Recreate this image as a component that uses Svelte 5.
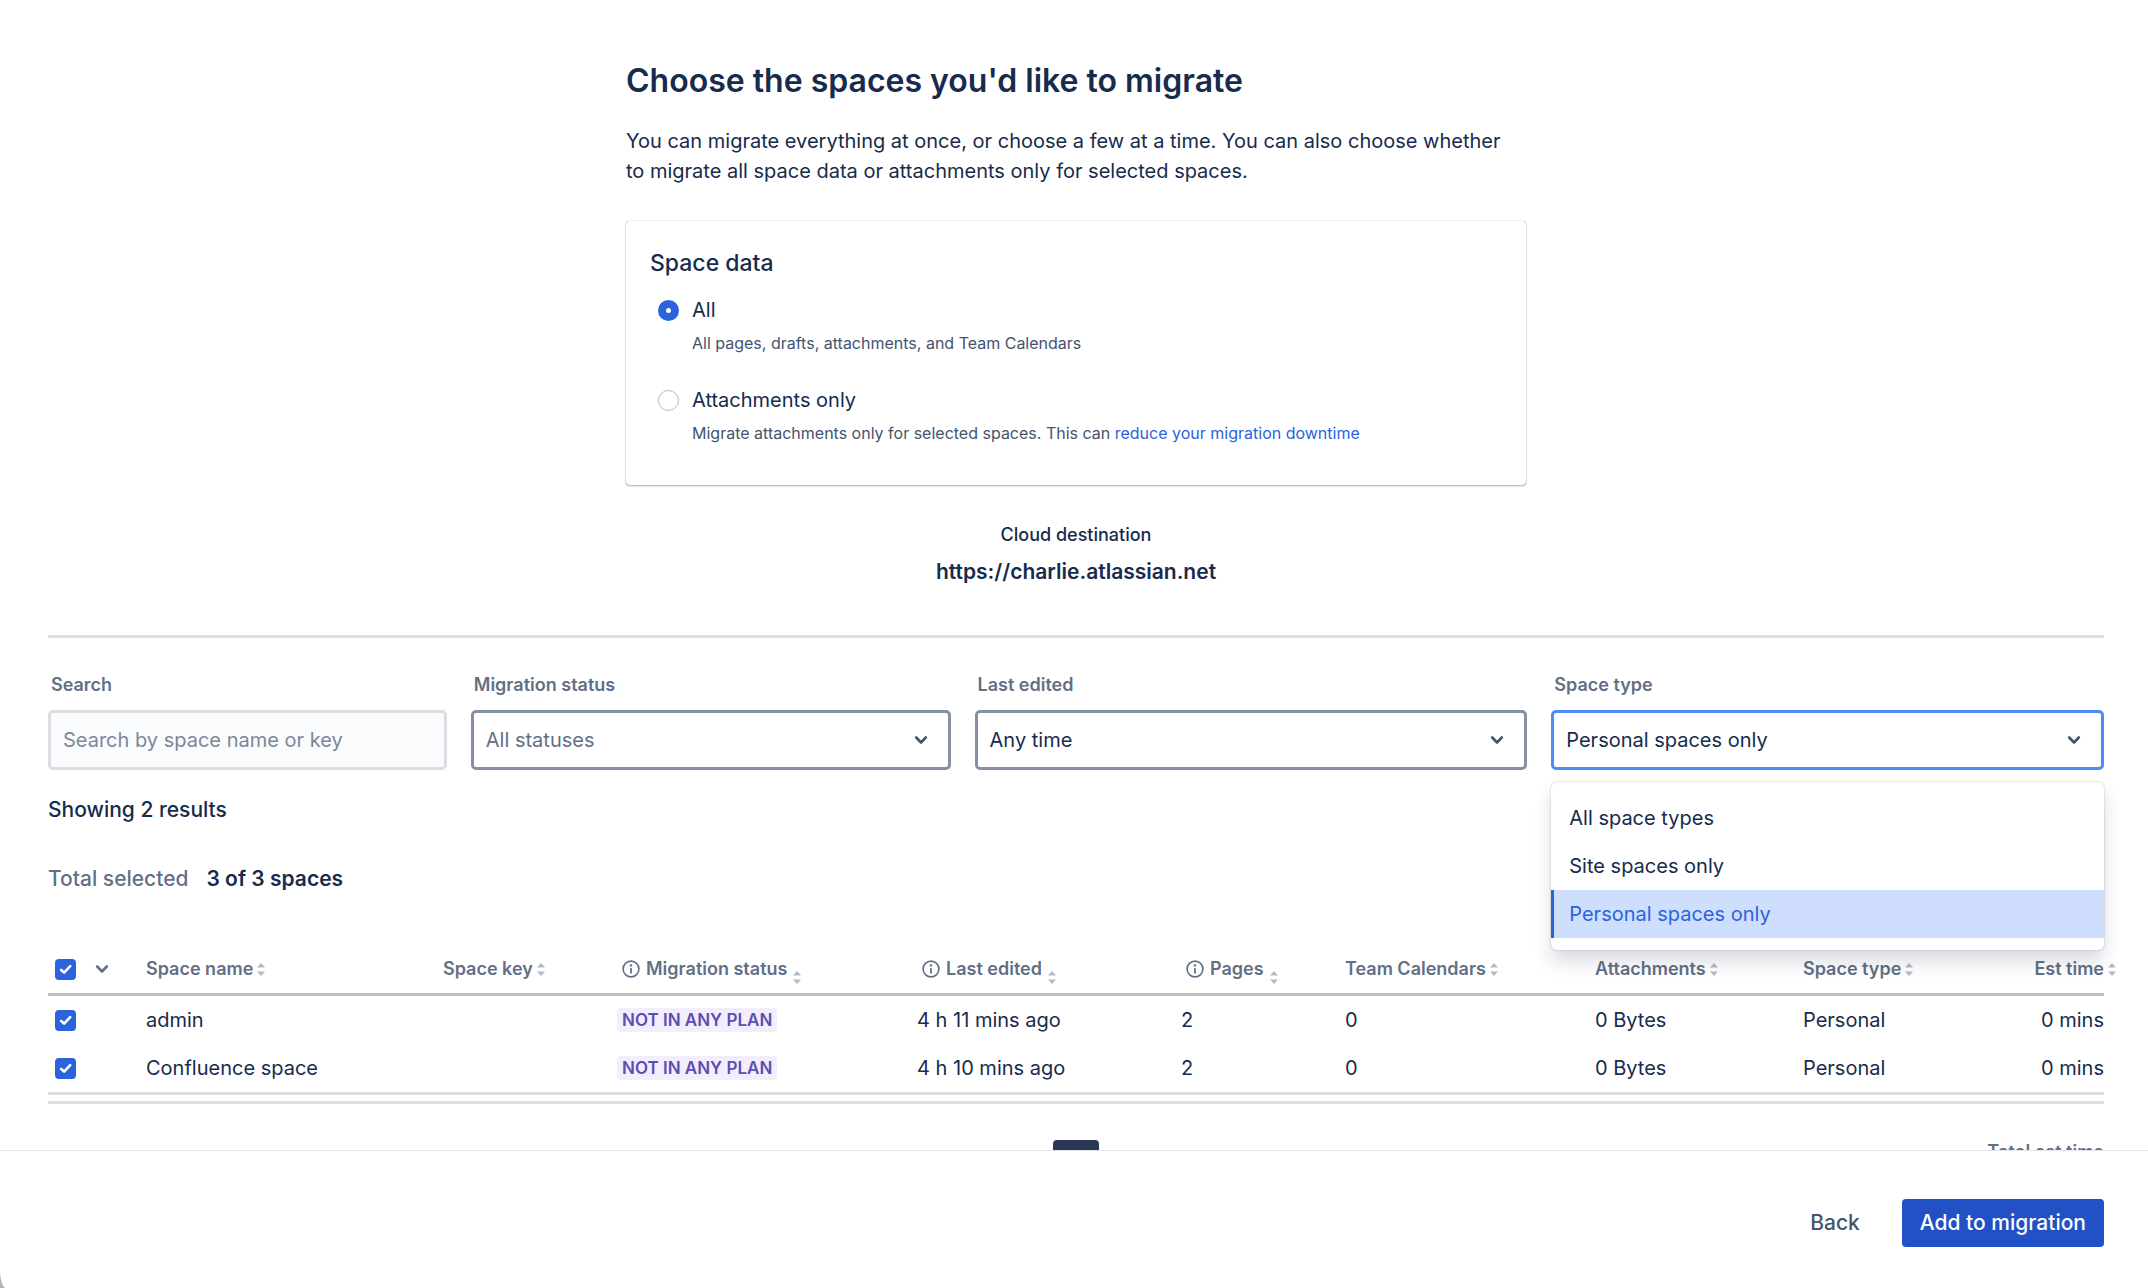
<script lang="ts">
    const statuses = ["All statuses", "Not in any plan", "Queued", "Migrated"];
    const editedOptions = ["Any time", "Last 30 days", "Last year"];
    const typeOptions = ["All space types", "Site spaces only", "Personal spaces only"];

    const columns = [
        { label: "Space name", cls: "col-name" },
        { label: "Space key", cls: "col-key" },
        { label: "Migration status", cls: "col-status", info: true },
        { label: "Last edited", cls: "col-edited", info: true },
        { label: "Pages", cls: "col-pages", info: true },
        { label: "Team Calendars", cls: "col-calendars" },
        { label: "Attachments", cls: "col-attachments" },
        { label: "Space type", cls: "col-type" },
        { label: "Est time", cls: "col-time" },
    ];

    let spaces = $state([
        { name: "admin", key: "", edited: "4 h 11 mins ago", pages: 2, calendars: 0, size: "0 Bytes", type: "Personal", time: "0 mins", checked: true },
        { name: "Confluence space", key: "", edited: "4 h 10 mins ago", pages: 2, calendars: 0, size: "0 Bytes", type: "Personal", time: "0 mins", checked: true },
    ]);

    let dataMode = $state("all");
    let search = $state("");
    let status = $state("All statuses");
    let edited = $state("Any time");
    let spaceType = $state("Personal spaces only");
    let menuOpen = $state(true);

    let allChecked = $derived(spaces.every((s) => s.checked));

    function toggleAll() {
        const next = !allChecked;
        spaces.forEach((s) => (s.checked = next));
    }

    function pickType(option: string) {
        spaceType = option;
        menuOpen = false;
    }
</script>

{#snippet chevron()}
    <svg class="chevron" viewBox="0 0 16 16" aria-hidden="true">
        <path d="M3.2 5.5 L8 10.5 L12.8 5.5" fill="none" stroke="currentColor" stroke-width="2.6" stroke-linecap="round" stroke-linejoin="round" />
    </svg>
{/snippet}

{#snippet checkbox(label: string, checked: boolean, onchange: () => void)}
    <span class="check">
        <input type="checkbox" aria-label={label} {checked} {onchange} />
        <svg viewBox="0 0 21 21" aria-hidden="true">
            <path d="M6.1 11 L9.1 13.6 L15.2 7.2" fill="none" stroke="#fff" stroke-width="2.6" stroke-linecap="round" stroke-linejoin="round" />
        </svg>
    </span>
{/snippet}

<div class="screen">
    <main>
        <section class="intro">
            <h1>Choose the spaces you'd like to migrate</h1>
            <p class="lead">
                You can migrate everything at once, or choose a few at a time. You can also choose whether
                to migrate all space data or attachments only for selected spaces.
            </p>

            <div class="card">
                <h2 id="space-data">Space data</h2>
                <div role="radiogroup" aria-labelledby="space-data">
                    <div class="option">
                        <input type="radio" id="mode-all" value="all" bind:group={dataMode} />
                        <label for="mode-all">All</label>
                        <p>All pages, drafts, attachments, and Team Calendars</p>
                    </div>
                    <div class="option">
                        <input type="radio" id="mode-attachments" value="attachments" bind:group={dataMode} />
                        <label for="mode-attachments">Attachments only</label>
                        <p>
                            Migrate attachments only for selected spaces. This can
                            <a href="#downtime">reduce your migration downtime</a>
                        </p>
                    </div>
                </div>
            </div>

            <div class="destination">
                <span>Cloud destination</span>
                <strong>https://charlie.atlassian.net</strong>
            </div>
        </section>

        <section class="filters">
            <div class="field field-search">
                <label for="search">Search</label>
                <input type="text" id="search" placeholder="Search by space name or key" bind:value={search} />
            </div>
            <div class="field field-status">
                <label for="status">Migration status</label>
                <div class="select muted">
                    <select id="status" bind:value={status}>
                        {#each statuses as option}<option>{option}</option>{/each}
                    </select>
                    {@render chevron()}
                </div>
            </div>
            <div class="field field-wide">
                <label for="edited">Last edited</label>
                <div class="select">
                    <select id="edited" bind:value={edited}>
                        {#each editedOptions as option}<option>{option}</option>{/each}
                    </select>
                    {@render chevron()}
                </div>
            </div>
            <div class="field field-wide">
                <label for="type">Space type</label>
                <div class="select" class:open={menuOpen}>
                    <select id="type" bind:value={spaceType}>
                        {#each typeOptions as option}<option>{option}</option>{/each}
                    </select>
                    {@render chevron()}
                    {#if menuOpen}
                        <div class="menu" role="listbox" aria-label="Space type">
                            {#each typeOptions as option}
                                <button
                                    type="button"
                                    role="option"
                                    aria-selected={option === spaceType}
                                    class:selected={option === spaceType}
                                    onclick={() => pickType(option)}>{option}</button>
                            {/each}
                        </div>
                    {/if}
                </div>
            </div>
        </section>

        <p class="results">Showing 2 results</p>
        <p class="totals"><span>Total selected</span><strong>3 of 3 spaces</strong></p>

        <table>
            <thead>
                <tr>
                    <th class="col-check">
                        <div class="check-all">
                            {@render checkbox("Select all spaces", allChecked, toggleAll)}
                            <button type="button" aria-label="Selection options">{@render chevron()}</button>
                        </div>
                    </th>
                    {#each columns as column}
                        <th class={column.cls}>
                            <button type="button" class="sort" class:with-info={column.info}>
                                {#if column.info}
                                    <svg class="info" viewBox="0 0 18 18" aria-hidden="true">
                                        <circle cx="9" cy="9" r="7.9" fill="none" stroke="currentColor" stroke-width="1.6" />
                                        <circle cx="9" cy="5.4" r="1.2" fill="currentColor" />
                                        <path d="M9 8.6 V12.8" stroke="currentColor" stroke-width="1.8" stroke-linecap="round" />
                                    </svg>
                                {/if}
                                {column.label}
                                <svg class="arrows" viewBox="0 0 8 13" aria-hidden="true">
                                    <path d="M0 4.5 L4 0 L8 4.5 Z M0 8.5 L4 13 L8 8.5 Z" fill="#b3b9c4" />
                                </svg>
                            </button>
                        </th>
                    {/each}
                </tr>
            </thead>
            <tbody>
                {#each spaces as space}
                    <tr>
                        <td>{@render checkbox(space.name, space.checked, () => (space.checked = !space.checked))}</td>
                        <td>{space.name}</td>
                        <td>{space.key}</td>
                        <td><span class="tag">NOT IN ANY PLAN</span></td>
                        <td>{space.edited}</td>
                        <td>{space.pages}</td>
                        <td>{space.calendars}</td>
                        <td>{space.size}</td>
                        <td>{space.type}</td>
                        <td class="time">{space.time}</td>
                    </tr>
                {/each}
            </tbody>
        </table>

        <div class="below">
            <button type="button" class="page" aria-label="Page one"></button>
            <span class="est">Total est time</span>
        </div>
    </main>

    <footer>
        <button type="button" class="back">Back</button>
        <button type="button" class="primary">Add to migration</button>
    </footer>
</div>

<style>
    :global(body) {
        background: #b4b4b4;
    }

    .screen {
        display: flex;
        flex-direction: column;
        height: 100vh;
        overflow: hidden;
        background: #fff;
        border-bottom-left-radius: 6px 18px;
        color: #172b4d;
        font-family: Inter, "Liberation Sans", sans-serif;
        font-size: 20px;
        line-height: 30px;
    }

    h1,
    h2,
    p {
        margin: 0;
    }

    button,
    input,
    select {
        font: inherit;
        color: inherit;
    }

    button {
        padding: 0;
        border: none;
        background: none;
        cursor: pointer;
    }

    main {
        flex: 1;
        min-height: 0;
        overflow: hidden;
        padding: 60px 44px 0 48px;
    }

    .intro {
        max-width: 900px;
        margin: 0 auto;
    }

    h1 {
        font-size: 32px;
        font-weight: 600;
        line-height: 42px;
    }

    .lead {
        margin-top: 24px;
        padding-right: 8px;
    }

    .card {
        margin-top: 35px;
        padding: 24px 24px 38px;
        border-radius: 4px;
        box-shadow: 0 1px 2px rgba(9, 30, 66, 0.35), 0 0 1px rgba(9, 30, 66, 0.4);
    }

    h2 {
        margin-bottom: 14px;
        font-size: 23px;
        font-weight: 500;
        line-height: 36px;
    }

    .option {
        display: grid;
        grid-template-columns: 21px 1fr;
        column-gap: 13px;
        align-items: center;
        margin-left: 8px;
    }

    .option + .option {
        margin-top: 28px;
    }

    .option input {
        appearance: none;
        width: 21px;
        height: 21px;
        margin: 0;
        border: 1px solid #b3b9c4;
        border-radius: 50%;
    }

    .option input:checked {
        border: 8px solid #2b63de;
    }

    .option p {
        grid-column: 2;
        margin-top: 4px;
        color: #44546f;
        font-size: 16px;
        line-height: 28px;
    }

    a {
        color: #2b63de;
        text-decoration: none;
    }

    .destination {
        display: flex;
        flex-direction: column;
        gap: 7px;
        margin-top: 35px;
        text-align: center;
    }

    .destination span {
        font-size: 18px;
        font-weight: 500;
    }

    strong {
        font-size: 21px;
        font-weight: 600;
    }

    .filters {
        display: flex;
        gap: 24px;
        margin-top: 48px;
        padding-top: 32px;
        border-top: 3px solid #dcdfe4;
    }

    .field {
        flex: 480 1 0;
        min-width: 0;
    }

    .field-search {
        flex-grow: 399;
    }

    .field-wide {
        flex-grow: 553;
    }

    .field > label {
        display: block;
        margin: 0 3px 10px;
        color: #626f86;
        font-size: 18px;
        font-weight: 600;
    }

    .field input,
    .select select {
        appearance: none;
        box-sizing: border-box;
        display: block;
        width: 100%;
        height: 60px;
        padding: 0 12px;
        border: 3px solid #dddee1;
        border-radius: 5px;
        background: #fafbfd;
        outline: none;
    }

    .field input::placeholder {
        color: #7c879a;
    }

    .select {
        position: relative;
    }

    .select select {
        border-color: #8590a2;
        background: #fff;
    }

    .muted select {
        color: #626f86;
    }

    .open select {
        border-color: #4c8bf8;
    }

    .chevron {
        display: block;
        width: 16px;
        height: 16px;
        color: #44546f;
    }

    .select > .chevron {
        position: absolute;
        top: 22px;
        right: 22px;
        pointer-events: none;
    }

    .menu {
        position: absolute;
        z-index: 2;
        top: 72px;
        left: 0;
        right: 0;
        padding: 12px 0;
        border-radius: 6px;
        background: #fff;
        box-shadow: 0 12px 18px rgba(9, 30, 66, 0.15), 0 0 2px rgba(9, 30, 66, 0.31);
    }

    .menu button {
        display: block;
        width: 100%;
        height: 48px;
        padding: 0 15px;
        border-left: 3px solid transparent;
        text-align: left;
    }

    .menu .selected {
        border-left-color: #2b63de;
        background: #cfdefc;
        color: #2b63de;
    }

    .results {
        margin-top: 25px;
        font-size: 21px;
        font-weight: 500;
    }

    .totals {
        display: flex;
        gap: 18px;
        margin-top: 39px;
        font-size: 21px;
    }

    .totals span {
        color: #626f86;
        font-weight: 500;
    }

    table {
        width: 100%;
        margin-top: 51px;
        padding-bottom: 6px;
        table-layout: fixed;
        border-collapse: separate;
        border-spacing: 0;
        border-bottom: 3px solid #dcdfe4;
    }

    .col-check { width: 98px; }
    .col-key { width: 174px; }
    .col-status { width: 300px; }
    .col-edited { width: 264px; }
    .col-pages { width: 164px; }
    .col-calendars { width: 250px; }
    .col-attachments { width: 208px; }
    .col-type { width: 150px; }
    .col-time { width: 151px; }

    th,
    td {
        height: 48px;
        padding: 0;
        text-align: left;
        white-space: nowrap;
    }

    th {
        border-bottom: 3px solid #b9bfcb;
        color: #626f86;
        font-size: 18px;
        font-weight: 600;
    }

    th .chevron {
        color: #626f86;
    }

    tbody tr:last-child td {
        border-bottom: 3px solid #dcdfe4;
    }

    tbody .time {
        text-align: right;
    }

    .check {
        position: relative;
        display: block;
        width: 21px;
        height: 21px;
        margin-left: 7px;
    }

    .check input {
        appearance: none;
        display: block;
        width: 21px;
        height: 21px;
        margin: 0;
        border: 2px solid #8590a2;
        border-radius: 4px;
    }

    .check input:checked {
        border-color: #2b63de;
        background: #2b63de;
    }

    .check svg {
        position: absolute;
        inset: 0;
        pointer-events: none;
    }

    .check-all {
        display: flex;
        align-items: center;
        gap: 18px;
    }

    .sort {
        display: flex;
        align-items: center;
        gap: 4px;
    }

    .with-info {
        gap: 6px;
        margin-left: 5px;
    }

    .with-info .arrows {
        align-self: flex-end;
    }

    .col-time .sort {
        margin: 0 -12px 0 auto;
    }

    .info {
        width: 18px;
        height: 18px;
    }

    .arrows {
        width: 8px;
        height: 13px;
    }

    .tag {
        display: block;
        width: max-content;
        padding: 0 5px;
        border-radius: 4px;
        background: #f2eefe;
        color: #5e4db2;
        font-size: 17px;
        font-weight: 600;
        line-height: 24px;
    }

    .below {
        display: grid;
        grid-template-columns: 1fr auto 1fr;
        margin-top: 36px;
    }

    .page {
        grid-column: 2;
        width: 46px;
        height: 48px;
        border-radius: 4px;
        background: #2a3856;
    }

    .est {
        justify-self: end;
        color: #626f86;
        font-size: 18px;
        font-weight: 600;
        line-height: 24px;
    }

    footer {
        display: flex;
        justify-content: flex-end;
        gap: 24px;
        padding: 48px 44px 41px 48px;
        border-top: 1px solid #e3e4e8;
    }

    footer button {
        height: 48px;
        padding: 0 18px;
        border-radius: 4px;
        font-size: 21px;
        font-weight: 500;
    }

    .back {
        color: #44546f;
    }

    .primary {
        background: #2251c5;
        color: #fff;
    }
</style>
